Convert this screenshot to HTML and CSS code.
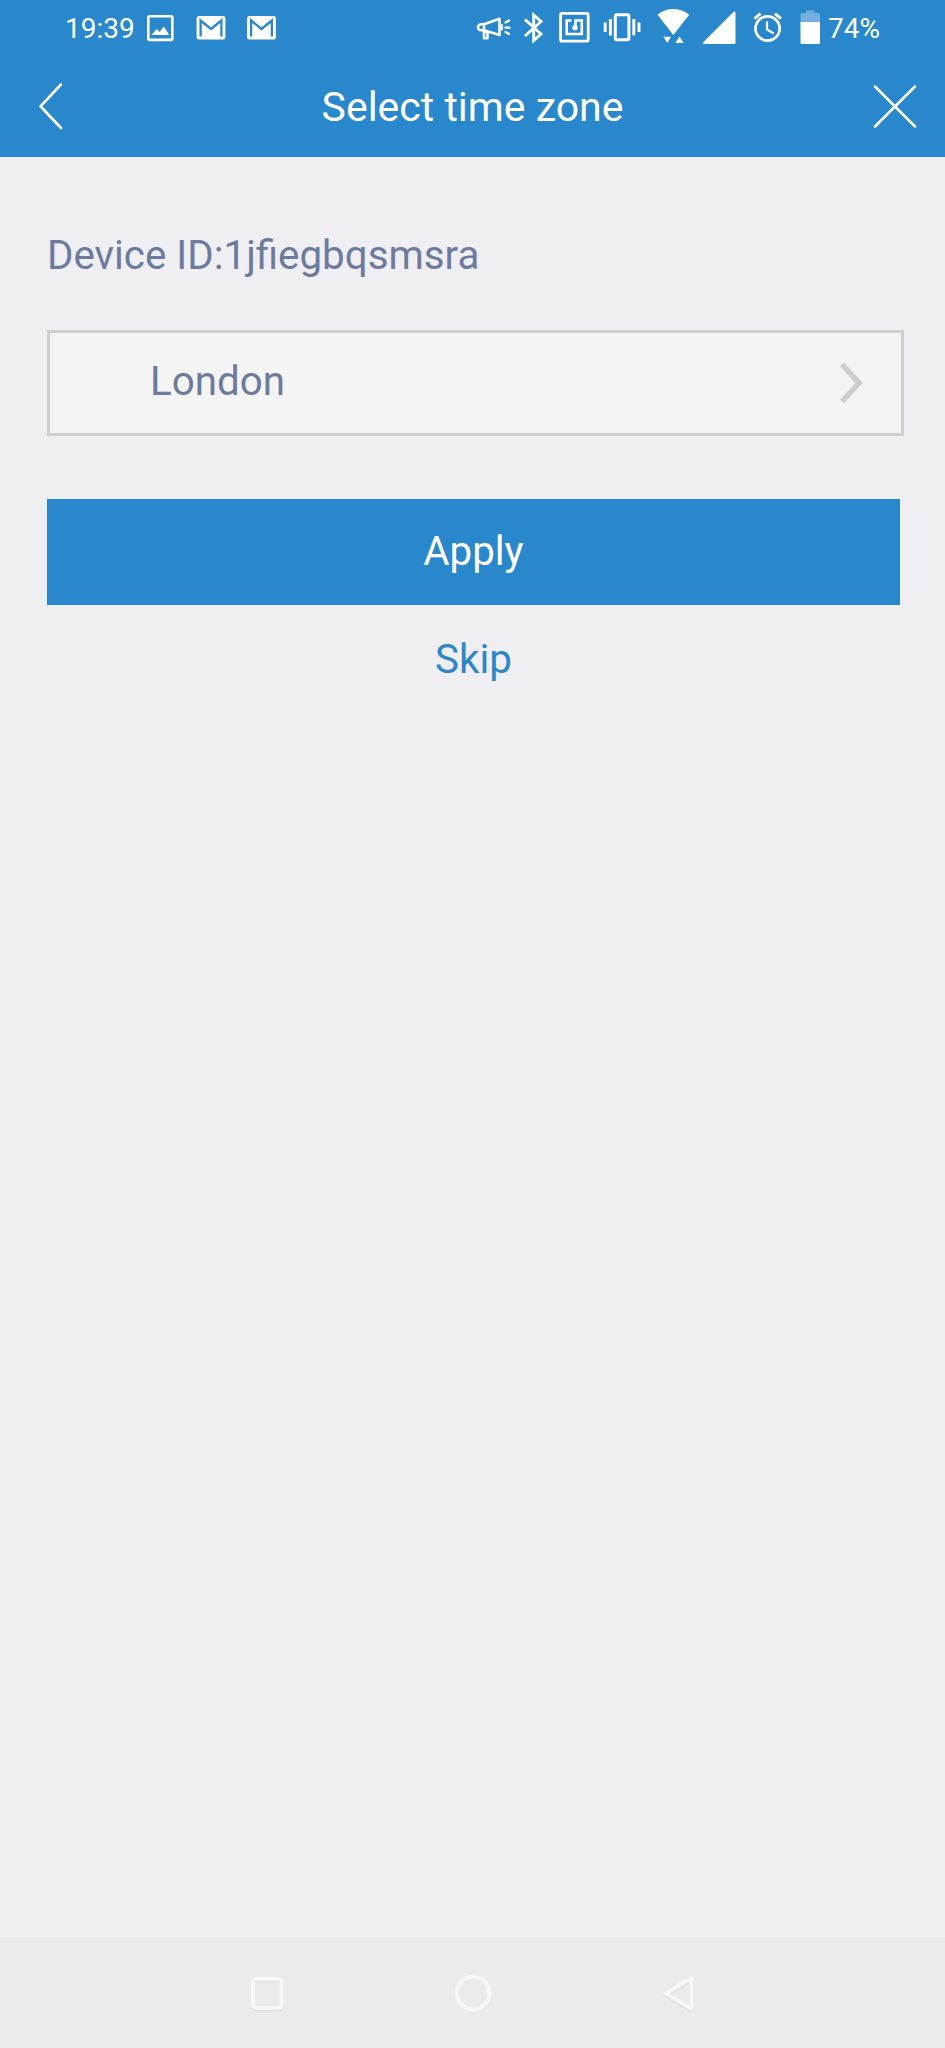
FILE: index.html
```html
<!DOCTYPE html>
<html lang="en">
<head>
<meta charset="utf-8">
<title>Select time zone</title>
<link rel="stylesheet" href="styles.css">
</head>
<body>
<div class="screen">
  <header class="header">
    <div class="status">
      <div class="status-group">
        <span class="clock">19:39</span>
        <svg class="icon" width="46" height="56" viewBox="140 0 46 56"><rect x="148.300" y="16.300" width="24" height="23.600" rx="1.500" fill="none" stroke="#fff" stroke-width="2.600"/><path d="M151.500 35l5.200-6 3 3 4-5.500 5.600 8.500z" fill="#fff"/></svg>
        <svg class="icon" width="50" height="56" viewBox="186 0 50 56"><rect x="196.600" y="16" width="28.800" height="23.500" rx="2.500" fill="#fff"/><path d="M200.600 36.500V20.500L211 29l10.400-8.500v16" fill="none" stroke="#2987cc" stroke-width="2.300"/></svg>
        <svg class="icon" width="50" height="56" viewBox="185.500 0 50 56"><rect x="196.600" y="16" width="28.800" height="23.500" rx="2.500" fill="#fff"/><path d="M200.600 36.500V20.500L211 29l10.400-8.500v16" fill="none" stroke="#2987cc" stroke-width="2.300"/></svg>
      </div>
      <div class="status-group">
        <svg class="icon" width="48" height="56" viewBox="470 0 48 56"><g fill="none" stroke="#fff" stroke-width="2.600" stroke-linejoin="round" stroke-linecap="round"><path d="M484 24.300L499.500 18.800V35L484 30.300h-3a3 3 0 0 1 0-6zM484 24.300v6M484 30.300v8h3.500v-7"/><path d="M505.500 22.500l3.500-2M505.500 27.700h4M505.500 32l3.500 2M501.800 25v4.500" stroke-width="2.200"/></g></svg>
        <svg class="icon" width="32" height="56" viewBox="518 0 32 56"><path d="M525 19.500L541 34l-7.300 6.500V15L541 21.500 525 36" fill="none" stroke="#fff" stroke-width="2.900"/></svg>
        <svg class="icon" width="47" height="56" viewBox="550 0 47 56"><g fill="none" stroke="#fff" stroke-width="2.800"><rect x="560.600" y="13.400" width="27.600" height="27.800" rx="1.500"/><path d="M571.500 20.500h-4.800v13.500h15.100V20.500h-6.300v6" stroke-width="2.600"/></g><circle cx="575" cy="27.700" r="2.600" fill="#fff"/></svg>
        <svg class="icon" width="51" height="56" viewBox="597 0 51 56"><rect x="615.300" y="14.700" width="13.600" height="25" rx="1.500" fill="none" stroke="#fff" stroke-width="3"/><path d="M610.400 19v16.500M605.200 22.500v9.500M633.800 19v16.500M639 22.500v9.500" stroke="#fff" stroke-width="2.900"/></svg>
        <svg class="icon" width="48" height="56" viewBox="648 0 48 56"><path d="M657.400 14.500C663 10.500 668 9 673 9s11 1.700 16.300 5.700L673.300 35zM663.500 36.700h7.500l-3.700 6.300zM675.300 43l4.200-6.600 4.200 6.600z" fill="#fff"/></svg>
        <svg class="icon" width="48" height="56" viewBox="696 0 48 56"><path d="M703.500 42L733.500 12q2-1.500 2 1V42.500q0 1.500-1.500 1.500h-29.500q-2.500 0-1-2z" fill="#fff"/></svg>
        <svg class="icon" width="48" height="56" viewBox="744 0 48 56"><g fill="none" stroke="#fff"><circle cx="767.600" cy="28.500" r="12.100" stroke-width="2.700"/><path d="M767 21.500v8l6.700 4" stroke-width="2.200"/><path d="M754.500 18.700l6-5M775 13.700l6 5" stroke-width="3"/></g></svg>
        <svg class="icon" width="36" height="56" viewBox="792 0 36 56"><path d="M800.500 22v-7.500q0-1.500 1.500-1.500h4v-2.500h8.500V13h4q1.500 0 1.500 1.500V22z" fill="#73aedd"/><path d="M800.500 22H820v20.500q0 1.500-1.500 1.500H802q-1.500 0-1.500-1.500z" fill="#fff"/></svg>
        <span class="battery-level">74%</span>
      </div>
    </div>
    <div class="titlebar">
      <svg class="icon" width="100" height="101" viewBox="0 56 100 101"><path d="M61 84.500L40.500 106.300 61 128" fill="none" stroke="#fff" stroke-width="2.700" stroke-linecap="round" stroke-linejoin="round"/></svg>
      <h1 class="title">Select time zone</h1>
      <svg class="icon" width="100" height="101" viewBox="845 56 100 101"><path d="M875 86.500l40 40M915 86.500l-40 40" fill="none" stroke="#fff" stroke-width="2.500" stroke-linecap="round"/></svg>
    </div>
  </header>
  <main class="content">
    <p class="device">Device ID:1jfiegbqsmsra</p>
    <div class="select">
      <span class="zone">London</span>
      <svg class="icon" width="30" height="48" viewBox="836 359 30 48"><path d="M842 364.500L859 383 842 401.500" fill="none" stroke="#cccccd" stroke-width="5.500"/></svg>
    </div>
    <button class="apply">Apply</button>
    <a class="skip">Skip</a>
  </main>
  <nav class="navbar">
    <svg class="nav-icons" width="945" height="111" viewBox="0 1937 945 111"><g fill="none" stroke-width="4" stroke-linejoin="round"><g stroke="#dddde1"><rect x="253" y="1980.200" width="28.500" height="29" rx="3"/><path d="M691.500 1979.700v30.500L665.500 1995z"/></g><g stroke="#f7f7fb"><rect x="253" y="1979" width="28.500" height="29" rx="3"/><circle cx="473" cy="1993" r="16.300"/><path d="M691.500 1978.300v30.500L665.500 1993.600z"/></g></g></svg>
  </nav>
</div>
</body>
</html>
```
FILE: styles.css
```css
* { box-sizing: border-box; }

body {
  margin: 0;
  font-family: Roboto, "Liberation Sans", sans-serif;
  background: #efeef3;
}

.screen {
  display: flex;
  flex-direction: column;
  height: 2048px;
}

.header {
  height: 157px;
  background: #2987cc;
  color: #fff;
}

.status {
  display: flex;
  justify-content: space-between;
  height: 56px;
  font-size: 28px;
  line-height: 58px;
}

.status-group { display: flex; }
.icon { display: block; flex: none; }

.clock {
  width: 140px;
  padding-left: 65px;
}

.battery-level {
  width: 117px;
}

.titlebar {
  display: flex;
  justify-content: space-between;
  height: 101px;
}

.title {
  margin: 0;
  font-size: 41px;
  font-weight: 400;
  line-height: 103px;
}

.content {
  display: flex;
  flex: 1;
  flex-direction: column;
  align-items: flex-start;
  padding: 75px 0 0 47px;
  font-size: 40.3px;
}

.device {
  margin: 0 0 50px;
  line-height: 48px;
  color: #6b7b9e;
}

.select {
  display: flex;
  align-items: center;
  justify-content: space-between;
  width: 857px;
  height: 106px;
  padding: 0 35px 0 100px;
  border: 3px solid #cfcfd1;
  background: #f4f4f4;
  color: #6b7b9e;
}

.zone { padding-bottom: 3px; }

.apply {
  width: 853px;
  height: 106px;
  margin: 63px 0 30px;
  padding: 0 0 2px;
  border: 0;
  background: #2987cc;
  color: #fff;
  font: inherit;
}

.skip {
  width: 853px;
  line-height: 50px;
  text-align: center;
  color: #2e86c6;
}

.navbar {
  height: 111px;
  background: #ebeaef;
}

.nav-icons { display: block; }
```
